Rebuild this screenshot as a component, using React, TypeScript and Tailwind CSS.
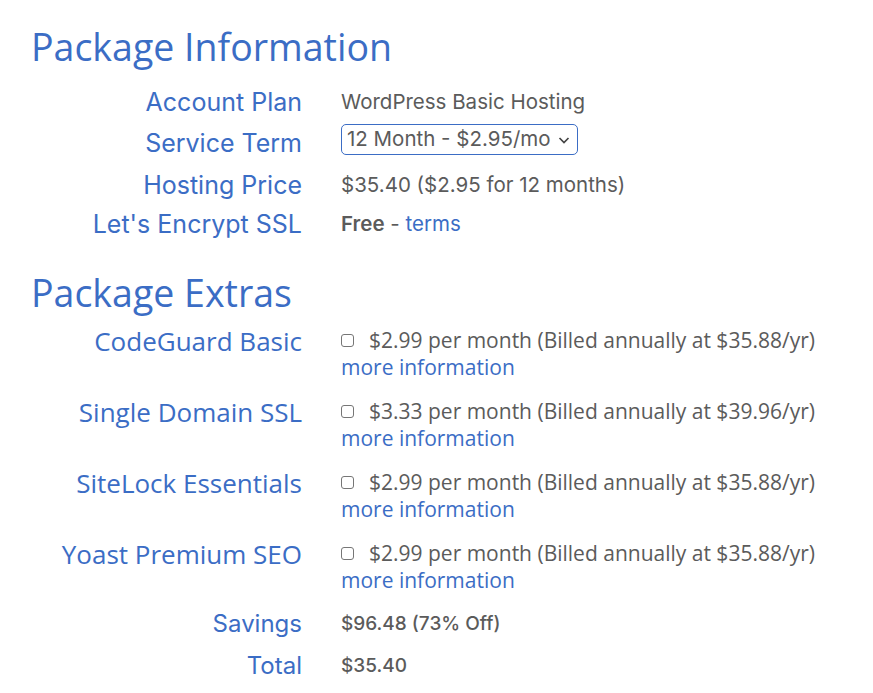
import React from 'react';

const blue = 'text-[#3b6dc5]';

const InfoRow: React.FC<{ label: string; h: string; size?: string; children: React.ReactNode }> = ({
  label,
  h,
  size = 'text-[25px]',
  children,
}) => (
  <div className={`flex items-start ${h}`}>
    <div className={`w-[302px] shrink-0 text-right leading-[32px] ${size} ${blue}`}>{label}</div>
    <div className="ml-[39px] leading-[32px]">{children}</div>
  </div>
);

const extras = [
  { name: 'CodeGuard Basic', price: '$2.99 per month (Billed annually at $35.88/yr)' },
  { name: 'Single Domain SSL', price: '$3.33 per month (Billed annually at $39.96/yr)' },
  { name: 'SiteLock Essentials', price: '$2.99 per month (Billed annually at $35.88/yr)' },
  { name: 'Yoast Premium SEO', price: '$2.99 per month (Billed annually at $35.88/yr)' },
];

const App: React.FC = () => {
  return (
    <div className="w-[873px] h-[693px] bg-white overflow-hidden font-['Open_Sans',sans-serif]">
      <div className="pt-[22px]">
        <h1 className={`pl-[31px] text-[37.5px] leading-[50px] ${blue}`}>Package Information</h1>

        {/* package info */}
        <div className="mt-[14px] font-['Inter',sans-serif] text-[20.5px] text-[#5b5b5b]">
          <InfoRow label="Account Plan" h="h-[41px]">
            <span>WordPress Basic Hosting</span>
          </InfoRow>
          <InfoRow label="Service Term" h="h-[42px]">
            <div className="-mt-[3px] flex items-center h-[31px] w-[237px] pl-[5px] pr-[6px] border border-[#3b6dc5] rounded-[5px] leading-none">
              <span>12 Month - $2.95/mo</span>
              <svg className="ml-auto" width="14" height="14" viewBox="0 0 14 14">
                <path d="M2.5 5 L7 9.5 L11.5 5" fill="none" stroke="#444" strokeWidth="1.7" />
              </svg>
            </div>
          </InfoRow>
          <InfoRow label="Hosting Price" h="h-[39px]">
            <span>$35.40 ($2.95 for 12 months)</span>
          </InfoRow>
          <InfoRow label="Let's Encrypt SSL" h="h-[39px]">
            <span className="font-semibold">Free</span> - <a className={blue}>terms</a>
          </InfoRow>
        </div>

        <h2 className={`mt-[21px] pl-[31px] text-[37.5px] leading-[50px] ${blue}`}>Package Extras</h2>

        {/* extras */}
        <div className="mt-[7px] text-[21px] text-[#5b5b5b]">
          {extras.map((x) => (
            <div key={x.name} className="flex items-start h-[71px]">
              <div className={`w-[302px] shrink-0 text-right text-[26px] leading-[32px] ${blue}`}>{x.name}</div>
              <div className="ml-[39px] pt-[2px] leading-[27px]">
                <div className="flex items-center">
                  <span className="w-[13px] h-[13px] border border-[#767676] rounded-[3px] mr-[15px]" />
                  <span>{x.price}</span>
                </div>
                <a className={blue}>more information</a>
              </div>
            </div>
          ))}
          <div className="-mt-[1px] font-['Inter',sans-serif] text-[19px]">
            <InfoRow label="Savings" h="h-[42px]" size="text-[24px]">
              <span className="font-medium">$96.48 (73% Off)</span>
            </InfoRow>
            <InfoRow label="Total" h="h-[42px]" size="text-[24px]">
              <span className="font-medium">$35.40</span>
            </InfoRow>
          </div>
        </div>
      </div>
    </div>
  );
};

export default App;
